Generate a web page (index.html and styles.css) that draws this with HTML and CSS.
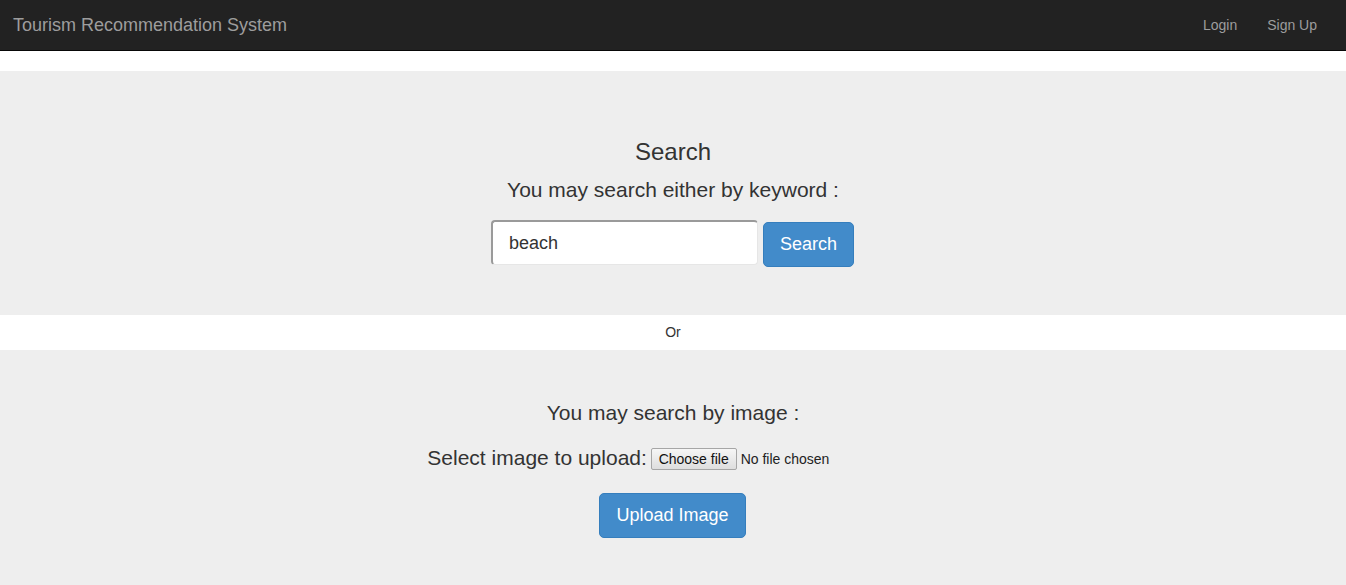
FILE: index.html
```html
<!DOCTYPE html>
<html>
<head>
<meta charset="utf-8">
<title>Tourism Recommendation System</title>
<link rel="stylesheet" href="styles.css">
</head>
<body>
<nav class="navbar">
  <a class="brand" href="#">Tourism Recommendation System</a>
  <ul class="nav-right">
    <li><a href="#">Login</a></li>
    <li><a href="#">Sign Up</a></li>
  </ul>
</nav>

<section class="jumbotron">
  <h3 class="title">Search</h3>
  <p class="lead">You may search either by keyword :</p>
  <form class="search-row">
    <input class="search-input" type="text" value="beach">
    <button class="btn-primary search-btn" type="button">Search</button>
  </form>
</section>

<div class="or-row">Or</div>

<section class="jumbotron">
  <p class="lead">You may search by image :</p>
  <p class="lead upload-line">Select image to upload: <label class="file-picker"><input type="file" class="file-hidden"><span class="file-btn">Choose file</span><span class="file-name">No file chosen</span></label></p>
  <div class="upload-row">
    <button class="btn-primary" type="button">Upload Image</button>
  </div>
</section>
</body>
</html>
```

FILE: styles.css
```css
html, body {
  margin: 0;
  padding: 0;
}
body {
  font-family: "Liberation Sans", Arial, sans-serif;
  font-size: 14px;
  line-height: 1.428571;
  color: #333;
  background: #fff;
}
.navbar {
  display: flex;
  align-items: center;
  justify-content: space-between;
  height: 50px;
  background: #222;
  border-bottom: 1px solid #080808;
  margin-bottom: 20px;
}
.brand {
  padding: 15px 13px;
  font-size: 18px;
  line-height: 20px;
  color: #9d9d9d;
  text-decoration: none;
}
.nav-right {
  display: flex;
  list-style: none;
  margin: 0 14px 0 0;
  padding: 0;
}
.nav-right a {
  display: block;
  padding: 15px 15px;
  line-height: 20px;
  color: #9d9d9d;
  text-decoration: none;
}
.jumbotron {
  background: #eee;
  padding: 48px 0;
  text-align: center;
}
.title {
  font-size: 24px;
  font-weight: 500;
  line-height: 1.1;
  margin: 20px 0 10px;
}
.lead {
  font-size: 21px;
  line-height: 30px;
  margin: 0 0 15px;
}
.search-row {
  display: flex;
  justify-content: center;
  align-items: flex-start;
  gap: 5px;
  margin: 0;
  padding-right: 1px;
}
.search-input {
  box-sizing: border-box;
  width: 267px;
  height: 45px;
  padding: 0 16px;
  font-family: "Liberation Sans", Arial, sans-serif;
  font-size: 18px;
  color: #333;
  background: #fff;
  border-style: solid;
  border-width: 2px 1px 1px 2px;
  border-color: #9a9a9a #e6e6e6 #e6e6e6 #9a9a9a;
  border-radius: 4px;
  outline: none;
}
.btn-primary {
  box-sizing: border-box;
  padding: 10px 16px;
  font-family: "Liberation Sans", Arial, sans-serif;
  font-size: 18px;
  line-height: 23px;
  color: #fff;
  background: #428bca;
  border: 1px solid #357ebd;
  border-radius: 5px;
  cursor: pointer;
}
.search-btn {
  margin-top: 2px;
  width: 91px;
}
.or-row {
  padding: 7px 0 8px;
  line-height: 20px;
  text-align: center;
}
.upload-line {
  margin-bottom: 19px;
}
.file-picker {
  display: inline-flex;
  align-items: center;
  gap: 4px;
  width: 268px;
  margin-left: -2px;
  vertical-align: 1px;
  font-size: 14px;
  line-height: 18px;
  color: #222;
  text-align: left;
  cursor: pointer;
}
.file-hidden {
  display: none;
}
.file-btn {
  box-sizing: border-box;
  width: 86px;
  height: 22px;
  padding: 1px 0 0;
  text-align: center;
  color: #111;
  background: linear-gradient(#f6f6f6, #dedede);
  border: 1px solid #a6a6a6;
  border-radius: 2px;
}
.upload-row {
  display: flex;
  justify-content: center;
  padding-right: 1px;
}
.upload-row .btn-primary {
  margin-top: 1px;
}
```
